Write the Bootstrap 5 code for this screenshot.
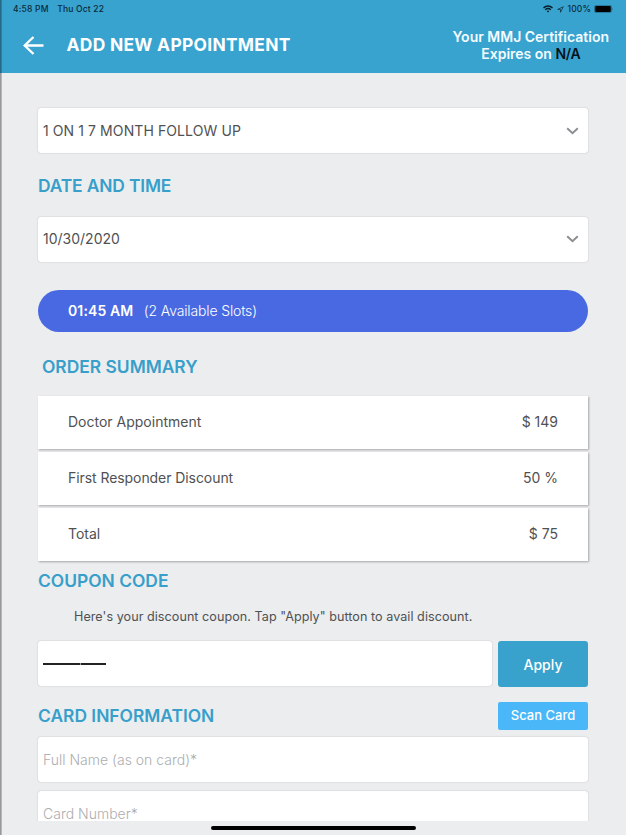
<!DOCTYPE html>
<html lang="en">
<head>
<meta charset="utf-8">
<meta name="viewport" content="width=device-width, initial-scale=1">
<title>Add New Appointment</title>
<link href="https://cdn.jsdelivr.net/npm/bootstrap@5.3.0/dist/css/bootstrap.min.css" rel="stylesheet">
<style>
  body { font-family: Inter, "Liberation Sans", sans-serif; background: #ebedef; color: #505153; font-size: 14px; line-height: 20px; height: 835px; }
  .edge-line { left: 0; top: 0; bottom: 0; width: 2px; background: linear-gradient(90deg, rgba(0,0,0,.42), rgba(0,0,0,.16)); z-index: 5; }
  .app-header { background: #38a3cf; height: 73px; }
  .status-bar { height: 17px; padding: 1px 12px 0 13px; font-size: 8.5px; font-weight: 500; line-height: 16px; color: #0b2a38; letter-spacing: .2px; }
  .status-date { margin-left: 8.5px; }
  .status-pct { margin-left: 3px; letter-spacing: .15px; }
  .battery { margin-left: 3px; }
  .title-bar { height: 56px; padding: 0 17px 0 23px; }
  .page-title { font-size: 17.4px; font-weight: 700; letter-spacing: .3px; margin-left: 22.5px; line-height: 24px; }
  .expiry { font-size: 14px; font-weight: 600; line-height: 16.5px; color: #f4fcff; padding-top: 1px; }
  .expiry .expiry-date { color: #06131a; letter-spacing: -.3px; }
  .scroll-area { height: 748px; padding: 35px 38px 0; }
  .field { height: 45px; background: #fff; border-radius: 3px; box-shadow: 0 0 1.5px rgba(0,0,0,.25); padding: 0 9px 0 5px; flex-shrink: 0; }
  .field-service { letter-spacing: .09px; }
  .field-date { padding-bottom: 1px; }
  .section-title { color: #389fca; font-size: 17.4px; font-weight: 600; line-height: 24px; margin: 0; }
  .title-date { margin-top: 21px; margin-bottom: 19px; letter-spacing: -.14px; }
  .title-order { margin-top: 23px; margin-bottom: 17px; }
  .title-coupon { margin-top: 8px; margin-bottom: 15px; }
  .slot { height: 42px; margin-top: 28px; border-radius: 21px; background: #4969e2; color: #fff; padding: 0 30px; }
  .slot-time { letter-spacing: .12px; }
  .slot-count { font-weight: 300; margin-left: 10.5px; letter-spacing: -.14px; }
  .summary-list { gap: 3px; }
  .summary-row { height: 53px; background: #fff; padding: 0 30px 1px; box-shadow: 1px 1px 2px rgba(0,0,0,.3); }
  .responder { letter-spacing: -.07px; }
  .hint { font-size: 12.6px; letter-spacing: .045px; padding-left: 36px; line-height: 18px; margin-bottom: 15px; }
  .coupon-row { gap: 6px; }
  .btn-apply { width: 90px; height: 46px; background: #38a2cd; color: #fff; font-size: 14px; font-weight: 500; border-radius: 3px; }
  .btn-scan { width: 90px; height: 28px; background: #4ab7f8; color: #fff; font-size: 13px; font-weight: 500; border-radius: 2px; }
  .card-head { margin-top: 15px; margin-bottom: 7px; }
  .field.ghost { font-weight: 300; color: #adaeb0; }
  .field.ghost + .ghost { margin-top: 9px; }
  .redacted { width: 63px; height: 1.5px; background: linear-gradient(90deg, #222 37.5px, #999 37.5px 38.5px, #222 38.5px); margin-top: 1px; }
  .home-bar { width: 205px; height: 4px; margin: 4.5px auto 0; border-radius: 2px; background: #000; }
</style>
</head>
<body class="overflow-hidden position-relative">
<div class="edge-line position-absolute"></div>
<header class="app-header">
  <div class="status-bar d-flex align-items-center justify-content-between">
    <div class="d-flex"><span>4:58 PM</span><span class="status-date">Thu Oct 22</span></div>
    <div class="d-flex align-items-center">
      <svg width="10" height="8" viewBox="0 0 10 8" fill="none" stroke="#061c27" stroke-width="1.4"><path d="M.5 2.900Q5-.9 9.500 2.900M2.200 4.700Q5 2.400 7.800 4.700"/><path d="M3.700 6.100Q5 5 6.300 6.100L5 7.500Z" fill="#061c27" stroke="none"/></svg>
      <svg class="ms-1" width="7" height="7" viewBox="0 0 7 7" fill="none" stroke="#123547" stroke-width=".8" stroke-linejoin="round"><path d="M6.300.7.7 3.400H3.500V6.300Z"/></svg>
      <span class="status-pct">100%</span>
      <svg class="battery" width="20" height="8" viewBox="0 0 20 8"><rect x=".5" y=".4" width="17" height="7.200" rx="1.600" fill="none" stroke="#1d5873" stroke-width=".6"/><rect x="1.200" y="1" width="15.600" height="6" rx="1" fill="#000"/><path d="M18.300 2.800q1.300 1.200 0 2.400z" fill="#1d5873"/></svg>
    </div>
  </div>
  <div class="title-bar d-flex align-items-center text-white">
    <svg width="21" height="19" viewBox="0 0 21 19" fill="none" stroke="#fff" stroke-width="2.400"><path d="M20.500 9.500H2M10.500 1 1.700 9.500 10.500 18"/></svg>
    <h1 class="page-title mb-0">ADD NEW APPOINTMENT</h1>
    <div class="expiry ms-auto text-center">Your MMJ Certification<br>Expires on <span class="expiry-date">N/A</span></div>
  </div>
</header>
<main class="scroll-area overflow-hidden">
  <div class="field field-service d-flex align-items-center justify-content-between"><span>1 ON 1 7 MONTH FOLLOW UP</span>
    <svg width="13" height="8" viewBox="0 0 13 8" fill="none" stroke="#8b8e91" stroke-width="1.900"><path d="M1.200 1.200 6.500 6.300 11.800 1.200"/></svg></div>
  <h2 class="section-title title-date">DATE AND TIME</h2>
  <div class="field field-date d-flex align-items-center justify-content-between"><span>10/30/2020</span>
    <svg width="13" height="8" viewBox="0 0 13 8" fill="none" stroke="#8b8e91" stroke-width="1.900"><path d="M1.200 1.200 6.500 6.300 11.800 1.200"/></svg></div>
  <div class="slot d-flex align-items-center"><span class="slot-time fw-semibold">01:45 AM</span><span class="slot-count">(2 Available Slots)</span></div>
  <h2 class="section-title title-order ps-1">ORDER SUMMARY</h2>
  <div class="summary-list d-grid">
    <div class="summary-row d-flex align-items-center justify-content-between"><span>Doctor Appointment</span><span>$ 149</span></div>
    <div class="summary-row d-flex align-items-center justify-content-between"><span class="responder">First Responder Discount</span><span>50 %</span></div>
    <div class="summary-row d-flex align-items-center justify-content-between"><span>Total</span><span>$ 75</span></div>
  </div>
  <h2 class="section-title title-coupon">COUPON CODE</h2>
  <div class="hint">Here's your discount coupon. Tap "Apply" button to avail discount.</div>
  <div class="coupon-row d-flex">
    <div class="field flex-grow-1 flex-shrink-1 d-flex align-items-center"><div class="redacted"></div></div>
    <button class="btn btn-apply border-0 p-0">Apply</button>
  </div>
  <div class="card-head d-flex align-items-center justify-content-between">
    <h2 class="section-title">CARD INFORMATION</h2>
    <button class="btn btn-scan border-0 p-0">Scan Card</button>
  </div>
  <div class="field ghost d-flex align-items-center">Full Name (as on card)*</div>
  <div class="field ghost d-flex align-items-center">Card Number*</div>
</main>
<div class="home-bar"></div>
<script src="https://cdn.jsdelivr.net/npm/bootstrap@5.3.0/dist/js/bootstrap.bundle.min.js"></script>
</body>
</html>
